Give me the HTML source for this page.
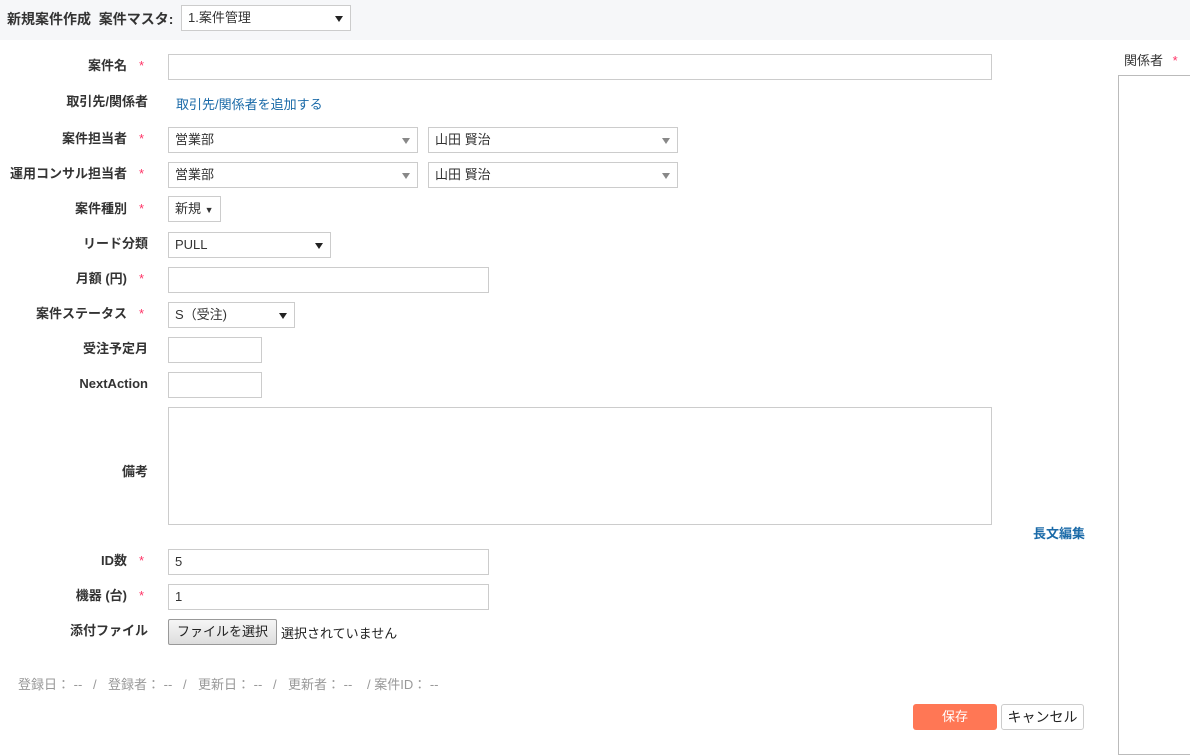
<!DOCTYPE html>
<html><head><meta charset="utf-8"><style>
*{box-sizing:border-box}
body{margin:0;width:1190px;height:747px;overflow:hidden;background:#fff;font-family:"Liberation Sans","Noto Sans CJK JP",sans-serif;font-size:13px;color:#333;position:relative}
.a{position:absolute}
.hdr{left:0;top:0;width:1190px;height:40px;background:#f6f7f9}
.lbl{position:absolute;font-weight:bold;color:#333;text-align:right;width:148px;left:0;line-height:16px}
.lbl.r{width:127px}
.st{position:absolute;left:139px;color:#f36;font-size:13px}
.in{position:absolute;border:1px solid #ccc;background:#fff;height:26px;padding:0 6px;line-height:24px;color:#333}
.sel::after{content:"";position:absolute;right:7px;top:10px;border-left:4px solid transparent;border-right:4px solid transparent;border-top:6px solid #222}
.sel.g::after{border-top-color:#888}
.ft{position:absolute;top:676px;color:#999;font-size:13px;white-space:pre;line-height:18px;height:18px}
</style></head><body>
<div class="a hdr"></div>
<div class="a" style="left:7px;top:9px;font-weight:bold;font-size:14px">新規案件作成&nbsp; 案件マスタ:</div>
<div class="in sel" style="left:181px;top:5px;width:170px;height:26px">1.案件管理</div>

<div class="lbl r" style="top:58px">案件名</div><div class="st" style="top:58px">*</div>
<div class="in" style="left:168px;top:54px;width:824px;height:26px"></div>

<div class="lbl" style="top:94px">取引先/関係者</div>
<div class="a" style="left:176px;top:94px;color:#1a6aa8">取引先/関係者を追加する</div>

<div class="lbl r" style="top:131px">案件担当者</div><div class="st" style="top:131px">*</div>
<div class="in sel g" style="left:168px;top:127px;width:250px">営業部</div>
<div class="in sel g" style="left:428px;top:127px;width:250px">山田 賢治</div>

<div class="lbl r" style="top:166px">運用コンサル担当者</div><div class="st" style="top:166px">*</div>
<div class="in sel g" style="left:168px;top:162px;width:250px">営業部</div>
<div class="in sel g" style="left:428px;top:162px;width:250px">山田 賢治</div>

<div class="lbl r" style="top:201px">案件種別</div><div class="st" style="top:201px">*</div>
<div class="in" style="left:168px;top:196px;width:53px">新規 <span style="font-size:9px">▼</span></div>

<div class="lbl" style="top:236px">リード分類</div>
<div class="in sel" style="left:168px;top:232px;width:163px">PULL</div>

<div class="lbl r" style="top:271px">月額 (円)</div><div class="st" style="top:271px">*</div>
<div class="in" style="left:168px;top:267px;width:321px"></div>

<div class="lbl r" style="top:306px">案件ステータス</div><div class="st" style="top:306px">*</div>
<div class="in sel" style="left:168px;top:302px;width:127px">S（受注)</div>

<div class="lbl" style="top:341px">受注予定月</div>
<div class="in" style="left:168px;top:337px;width:94px"></div>

<div class="lbl" style="top:376px">NextAction</div>
<div class="in" style="left:168px;top:372px;width:94px"></div>

<div class="lbl" style="top:464px">備考</div>
<div class="in" style="left:168px;top:407px;width:824px;height:118px"></div>
<div class="a" style="left:1033px;top:523px;color:#1a6aa8;font-weight:bold">長文編集</div>

<div class="lbl r" style="top:553px">ID数</div><div class="st" style="top:553px">*</div>
<div class="in" style="left:168px;top:549px;width:321px">5</div>

<div class="lbl r" style="top:588px">機器 (台)</div><div class="st" style="top:588px">*</div>
<div class="in" style="left:168px;top:584px;width:321px">1</div>

<div class="lbl" style="top:623px">添付ファイル</div>
<div class="a" style="left:168px;top:619px;width:109px;height:26px;border:1px solid #999;border-radius:2px;background:linear-gradient(#f6f6f6,#ddd);text-align:center;line-height:24px;color:#222">ファイルを選択</div>
<div class="a" style="left:281px;top:623px;color:#222">選択されていません</div>

<div class="ft" style="left:18px">登録日： --</div>
<div class="ft" style="left:108px">登録者： --</div>
<div class="ft" style="left:198px">更新日： --</div>
<div class="ft" style="left:288px">更新者： --</div>
<div class="ft" style="left:367px">/ 案件ID： --</div>
<div class="ft" style="left:18px;width:360px;text-align:left"><span style="position:absolute;left:75px">/</span><span style="position:absolute;left:165px">/</span><span style="position:absolute;left:255px">/</span></div>

<div class="a" style="left:913px;top:704px;width:84px;height:26px;background:#ff7755;border-radius:3px;color:#fff;text-align:center;line-height:26px">保存</div>
<div class="a" style="left:1001px;top:704px;width:83px;height:26px;border:1px solid #ccc;border-radius:3px;color:#222;text-align:center;line-height:24px;font-size:14px">キャンセル</div>

<div class="a" style="left:1124px;top:50px;font-size:13px">関係者 <span style="color:#f36;margin-left:6px">*</span></div>
<div class="a" style="left:1118px;top:75px;width:80px;height:680px;border:1px solid #bbb"></div>
</body></html>
